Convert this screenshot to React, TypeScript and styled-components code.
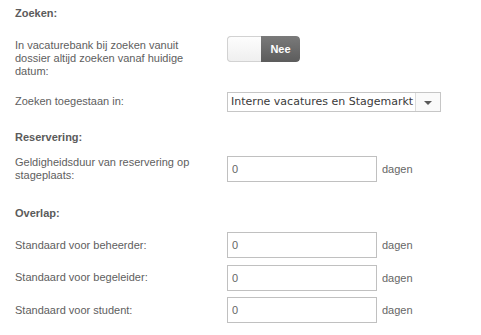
import React from "react";
import styled, { createGlobalStyle } from "styled-components";

const GlobalStyle = createGlobalStyle`
  body {
    margin: 0;
    background: #fff;
    font-family: "Liberation Sans", Arial, sans-serif;
  }
`;

export default function App() {
  return (
    <Page>
      <GlobalStyle />
      <Heading>Zoeken:</Heading>
      <Row $top={16} $align="start">
        <Label $pad={2.5}>
          In vacaturebank bij zoeken vanuit dossier altijd zoeken vanaf huidige
          datum:
        </Label>
        <Toggle>
          <ToggleOff />
          <ToggleOn>Nee</ToggleOn>
        </Toggle>
      </Row>
      <Row $top={14} $align="center">
        <Label>Zoeken toegestaan in:</Label>
        <Select>
          <SelectValue>Interne vacatures en Stagemarkt</SelectValue>
          <SelectButton>
            <Arrow />
          </SelectButton>
        </Select>
      </Row>

      <Heading $top={18}>Reservering:</Heading>
      <Row $top={12} $align="start">
        <Label $pad={0.5}>Geldigheidsduur van reservering op stageplaats:</Label>
        <Field>
          <NumberInput defaultValue="0" />
          <Unit>dagen</Unit>
        </Field>
      </Row>

      <Heading $top={24}>Overlap:</Heading>
      <Row $top={12} $align="center">
        <Label>Standaard voor beheerder:</Label>
        <Field>
          <NumberInput defaultValue="0" />
          <Unit>dagen</Unit>
        </Field>
      </Row>
      <Row $top={6.5} $align="center">
        <Label>Standaard voor begeleider:</Label>
        <Field>
          <NumberInput defaultValue="0" />
          <Unit>dagen</Unit>
        </Field>
      </Row>
      <Row $top={6.5} $align="center">
        <Label>Standaard voor student:</Label>
        <Field>
          <NumberInput defaultValue="0" />
          <Unit>dagen</Unit>
        </Field>
      </Row>
    </Page>
  );
}

const Page = styled.div`
  padding: 6px 15px 10px;
  width: 481px;
  box-sizing: border-box;
  color: #5e5e5e;
  font-size: 11px;
`;

const Heading = styled.div<{ $top?: number }>`
  margin-top: ${(p) => p.$top ?? 0}px;
  font-weight: bold;
  line-height: 14px;
  color: #5b5b5b;
`;

const Row = styled.div<{ $top: number; $align: string }>`
  display: grid;
  grid-template-columns: 212px auto;
  align-items: ${(p) => p.$align};
  margin-top: ${(p) => p.$top}px;
`;

const Label = styled.div<{ $pad?: number }>`
  padding-top: ${(p) => p.$pad ?? 0}px;
  padding-right: 28px;
  line-height: 13px;
`;

const Toggle = styled.div`
  display: flex;
  width: 73px;
  height: 26px;
  border-radius: 4px;
  overflow: hidden;
  box-shadow: 0 0 0 1px #d4d4d4 inset;
`;

const ToggleOff = styled.div`
  width: 33px;
  border: 1px solid #d2d2d2;
  border-right: none;
  border-radius: 4px 0 0 4px;
  background: linear-gradient(#fdfdfd, #efefef);
`;

const ToggleOn = styled.div`
  flex: 1;
  display: flex;
  align-items: center;
  justify-content: center;
  background: linear-gradient(#7a7a7a, #5c5c5c);
  color: #fff;
  font-weight: bold;
  font-size: 11px;
  border-radius: 0 4px 4px 0;
`;

const Select = styled.div`
  display: flex;
  width: 214px;
  height: 20px;
  box-sizing: border-box;
  border: 1px solid #c6c6c6;
  background: #fff;
`;

const SelectValue = styled.div`
  flex: 1;
  padding-left: 3px;
  line-height: 18px;
  font-family: "DejaVu Sans", Verdana, sans-serif;
  font-size: 11px;
  color: #3a3a3a;
  white-space: nowrap;
  overflow: hidden;
`;

const SelectButton = styled.div`
  width: 24px;
  display: flex;
  align-items: center;
  justify-content: center;
  border-left: 1px solid #dcdcdc;
  background: #fafafa;
`;

const Arrow = styled.div`
  width: 0;
  height: 0;
  margin-top: 3px;
  border-left: 4px solid transparent;
  border-right: 4px solid transparent;
  border-top: 4px solid #5a5a5a;
`;

const Field = styled.div`
  display: flex;
  align-items: center;
  gap: 5px;
`;

const NumberInput = styled.input`
  width: 150px;
  height: 26px;
  box-sizing: border-box;
  border: 1px solid #c0c0c0;
  padding: 0 4px;
  font-family: "Liberation Sans", Arial, sans-serif;
  font-size: 11px;
  color: #666;
  outline: none;
`;

const Unit = styled.span`
  color: #666;
`;
